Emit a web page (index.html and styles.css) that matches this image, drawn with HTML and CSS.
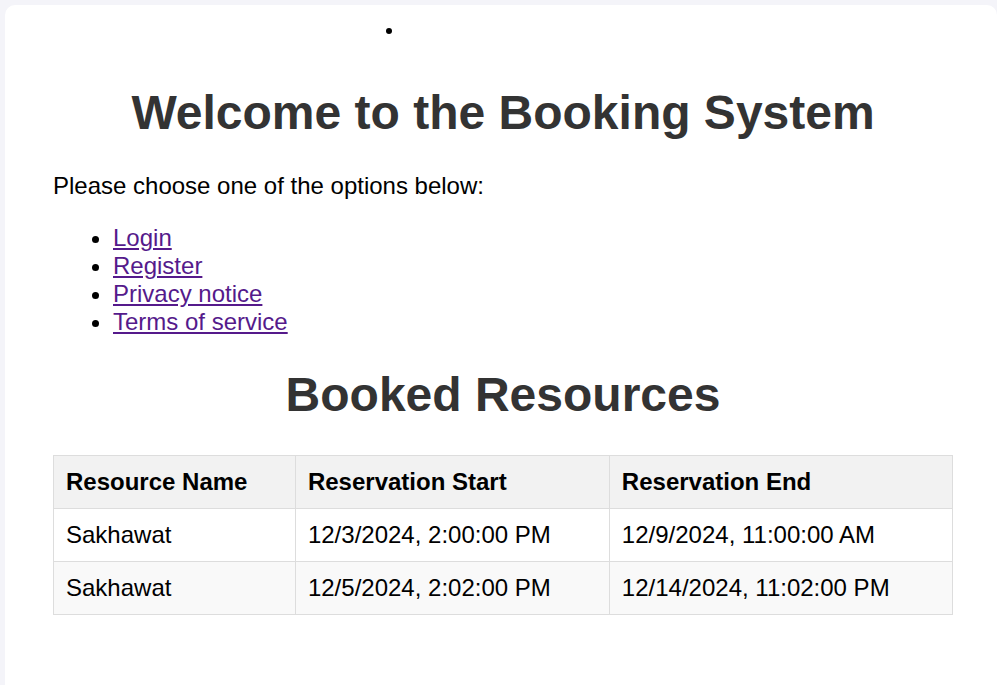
FILE: index.html
```html
<!DOCTYPE html>
<html lang="en">
<head>
<meta charset="utf-8">
<title>Booking System</title>
<link rel="stylesheet" href="styles.css">
</head>
<body>
<div class="container">
  <div class="topbar"><span class="dot"></span></div>
  <h1 class="title">Welcome to the Booking System</h1>
  <p class="intro">Please choose one of the options below:</p>
  <ul class="links">
    <li><a href="#">Login</a></li>
    <li><a href="#">Register</a></li>
    <li><a href="#">Privacy notice</a></li>
    <li><a href="#">Terms of service</a></li>
  </ul>
  <h2 class="title sub">Booked Resources</h2>
  <table class="bookings">
    <thead>
      <tr><th>Resource Name</th><th>Reservation Start</th><th>Reservation End</th></tr>
    </thead>
    <tbody>
      <tr><td>Sakhawat</td><td>12/3/2024, 2:00:00 PM</td><td>12/9/2024, 11:00:00 AM</td></tr>
      <tr><td>Sakhawat</td><td>12/5/2024, 2:02:00 PM</td><td>12/14/2024, 11:02:00 PM</td></tr>
    </tbody>
  </table>
</div>
</body>
</html>
```
FILE: styles.css
```css
html, body {
  margin: 0;
  padding: 0;
  height: 685px;
  background: #f4f4f9;
  font-family: "Liberation Sans", Arial, sans-serif;
  font-size: 24px;
  color: #000;
  overflow: hidden;
}
.container {
  box-sizing: border-box;
  margin: 5px 0 0 5px;
  background: #fff;
  border-radius: 10px 10px 0 0;
  padding: 0 44px 40px 48px;
  height: 680px;
}
.topbar {
  padding: 23px 0 0 333px;
  height: 6px;
}
.dot {
  display: block;
  width: 6px;
  height: 6px;
  border-radius: 50%;
  background: #000;
}
.title {
  font-size: 48px;
  font-weight: bold;
  color: #333;
  text-align: center;
  margin: 51px 0 32px;
  line-height: 55px;
}
.intro {
  margin: 32px 0 24px;
  line-height: 28px;
}
.links {
  margin: 24px 0;
  padding-left: 60px;
  line-height: 28px;
}
.links a {
  color: #551a8b;
}
.sub {
  margin: 31px 0 33px;
}
.bookings {
  width: 100%;
  border-collapse: collapse;
}
.bookings th, .bookings td {
  border: 1px solid #ddd;
  padding: 12px;
  text-align: left;
  line-height: 28px;
}
.bookings th {
  background: #f2f2f2;
}
.bookings tbody tr:nth-child(even) {
  background: #f9f9f9;
}
```
